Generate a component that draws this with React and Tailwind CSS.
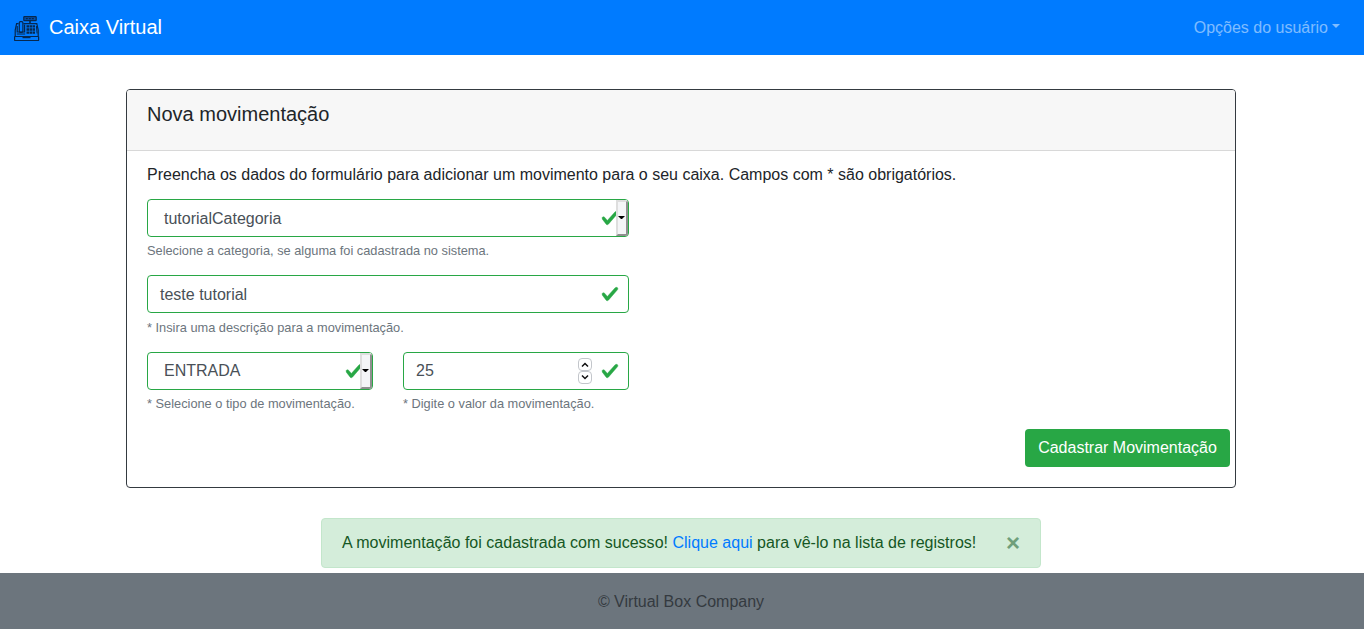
function RegisterLogo() {
  return (
    <svg className="mt-px h-[30px] w-[30px]" viewBox="0 0 30 30" fill="none" stroke="#06284f" strokeWidth="1.2">
      <rect x="11.8" y="3.6" width="12.4" height="4" rx=".6" fill="#0650ac" />
      <path d="M13.8 5.6h8.4" strokeDasharray="2 1" />
      <path d="M18 7.6v3" strokeWidth="1.6" />
      <path d="M6.6 10.6H4.6L3.2 17v6M11.4 10.6h13.4L26.2 17v6" />
      <rect x="7.3" y="8.7" width="3.6" height="10.6" rx="1" />
      <path d="M5.2 13v6h7.4v-7.6" />
      <path
        d="M14.5 13.4h8.5M14.5 16.5h8.5M14.5 19.6h8.5"
        strokeWidth="2.4"
        strokeDasharray="2.5 .5"
      />
      <path d="M4.8 21h8.4M24.4 13l.7 7.5" strokeWidth="1" />
      <rect x="2.6" y="23.5" width="24" height="4" rx=".3" />
      <path d="M10.5 24.6h8" />
    </svg>
  );
}

function Check() {
  return (
    <svg className="h-[18px] w-[18px] shrink-0" viewBox="0 0 8 8">
      <path
        fill="#28a745"
        stroke="#28a745"
        strokeWidth=".2"
        d="M2.3 6.73L.6 4.53c-.4-1.04.46-1.4 1.1-.8l1.1 1.4 3.4-3.8c.6-.63 1.6-.27 1.2.7l-4 4.6c-.43.5-.8.4-1.1.1z"
      />
    </svg>
  );
}

function SelectBox({ value, className = "" }) {
  return (
    <div className="flex h-[38px] items-center overflow-hidden rounded border border-[#28a745] bg-white pl-4 text-[#495057]">
      <span className={`grow ${className}`}>{value}</span>
      <Check />
      <span className="relative -ml-[3px] flex h-9 w-3 shrink-0 items-center justify-center border-2 border-t-[#dedede] border-r-[#8f8f8f] border-b-[#8f8f8f] border-l-[#dedede] bg-[#f4f5f7]">
        <svg className="mr-px mb-px h-[3px] w-[7px] shrink-0" viewBox="0 0 7 3">
          <path d="M0 0h7L4 3H3z" fill="#000" />
        </svg>
      </span>
    </div>
  );
}

function Stepper() {
  return (
    <span className="mr-[9px] flex flex-col">
      {["M1 5.5L4 2.5 7 5.5", "M1 1.5L4 4.5 7 1.5"].map((d) => (
        <span
          key={d}
          className="flex h-[13px] w-[14px] items-center justify-center rounded-[4px] border border-[#c3c6cb] bg-white"
        >
          <svg className="h-2 w-2" viewBox="0 0 8 8" fill="none" stroke="#111" strokeWidth="1.5">
            <path d={d} />
          </svg>
        </span>
      ))}
    </span>
  );
}

function TextBox({ value, stepper, className = "" }) {
  return (
    <div className="flex h-[38px] items-center rounded border border-[#28a745] bg-white pr-[9px] pl-3 text-[#495057]">
      <span className={`grow ${className}`}>{value}</span>
      {stepper && <Stepper />}
      <Check />
    </div>
  );
}

function Help({ children, className = "mt-1" }) {
  return <small className={`block text-[12.8px] leading-[19.2px] text-[#6c757d] ${className}`}>{children}</small>;
}

export default function App() {
  return (
    <div className="flex h-[629px] flex-col bg-white font-['Liberation_Sans',Arial,sans-serif] text-base leading-6 text-[#212529]">
      <nav className="flex h-[55px] shrink-0 items-center justify-between bg-[#007bff] pr-6 pl-3">
        <div className="flex items-center text-xl leading-[30px] text-white">
          <RegisterLogo />
          <span className="mb-0.5 ml-[7px]">Caixa Virtual</span>
        </div>
        <div className="flex items-center text-white/50">
          Opções do usuário
          <svg className="mb-[3px] ml-1 h-1 w-2" viewBox="0 0 8 4">
            <path d="M0 0h8L4 4z" fill="currentColor" />
          </svg>
        </div>
      </nav>

      <main className="mt-[34px] ml-[126px] h-[399px] w-[1110px] shrink-0 rounded border border-[#343a40]">
        <header className="h-[61px] rounded-t-[3px] border-b border-[#d8d8d8] bg-[#f7f7f7] px-5 pt-3">
          <h5 className="text-xl leading-6 font-medium">Nova movimentação</h5>
        </header>
        <div className="px-5 pt-3">
          <p>Preencha os dados do formulário para adicionar um movimento para o seu caixa. Campos com * são obrigatórios.</p>
          <form className="mt-3 w-[482px]">
            <div className="h-[76px]">
              <SelectBox value="tutorialCategoria" className="pt-0.5" />
              <Help>Selecione a categoria, se alguma foi cadastrada no sistema.</Help>
            </div>
            <div className="h-[77px]">
              <TextBox value="teste tutorial" className="pt-0.5" />
              <Help className="mt-[5px]">* Insira uma descrição para a movimentação.</Help>
            </div>
            <div className="grid h-[77px] grid-cols-2 gap-[30px]">
              <div>
                <SelectBox value="ENTRADA" />
                <Help>* Selecione o tipo de movimentação.</Help>
              </div>
              <div>
                <TextBox value="25" stepper />
                <Help>* Digite o valor da movimentação.</Help>
              </div>
            </div>
          </form>
        </div>
        <div className="flex justify-end pr-[5px]">
          <button className="h-[38px] w-[205px] rounded bg-[#28a745] text-white">Cadastrar Movimentação</button>
        </div>
      </main>

      <div className="mt-[30px] ml-[321px] flex h-[50px] w-[720px] shrink-0 items-center justify-between rounded border border-[#c3e6cb] bg-[#d4edda] px-5 text-[#155724]">
        <p className="tracking-[0.012px]">
          A movimentação foi cadastrada com sucesso! <a className="text-[#007bff]">Clique aqui</a> para vê-lo na
          lista de registros!
        </p>
        <button className="text-2xl leading-6 font-bold text-[#6f9f7b]">×</button>
      </div>

      <footer className="mt-[5px] flex h-14 shrink-0 items-center justify-center bg-[#6c757d] pt-0.5 pr-[2px] text-[#343a40]">
        © Virtual Box Company
      </footer>
    </div>
  );
}
